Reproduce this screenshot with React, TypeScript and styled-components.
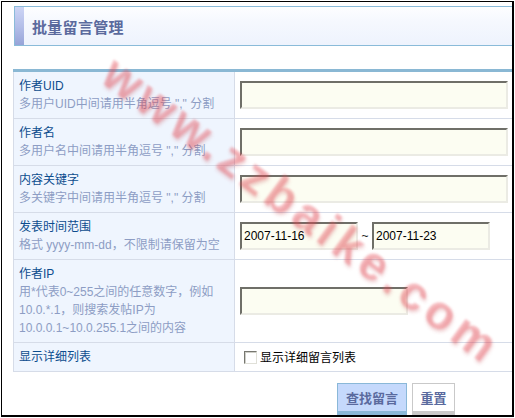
import React from "react";
import styled, { createGlobalStyle } from "styled-components";

const GlobalStyle = createGlobalStyle`
  html, body {
    margin: 0;
    padding: 0;
    background: #ffffff;
  }
  body {
    font-family: "Liberation Sans", "Noto Sans CJK SC", sans-serif;
    font-size: 12px;
  }
  * {
    box-sizing: border-box;
  }
`;

type Field = {
  label: string;
  hints: string[];
  kind: "text" | "date" | "short" | "check";
};

const fields: Field[] = [
  { label: "作者UID", hints: ['多用户UID中间请用半角逗号 "," 分割'], kind: "text" },
  { label: "作者名", hints: ['多用户名中间请用半角逗号 "," 分割'], kind: "text" },
  { label: "内容关键字", hints: ['多关键字中间请用半角逗号 "," 分割'], kind: "text" },
  { label: "发表时间范围", hints: ["格式 yyyy-mm-dd，不限制请保留为空"], kind: "date" },
  {
    label: "作者IP",
    hints: [
      "用*代表0~255之间的任意数字，例如",
      "10.0.*.1，则搜索发帖IP为",
      "10.0.0.1~10.0.255.1之间的内容",
    ],
    kind: "short",
  },
  { label: "显示详细列表", hints: [], kind: "check" },
];

export default function App() {
  const renderControl = (field: Field) => {
    switch (field.kind) {
      case "date":
        return (
          <DateRange>
            <TextInput $width={118} defaultValue="2007-11-16" />
            <Tilde>~</Tilde>
            <TextInput $width={118} defaultValue="2007-11-23" />
          </DateRange>
        );
      case "short":
        return <TextInput $width={168} />;
      case "check":
        return (
          <CheckLabel>
            <CheckBox type="checkbox" />
            显示详细留言列表
          </CheckLabel>
        );
      default:
        return <TextInput $width={268} />;
    }
  };

  return (
    <>
      <GlobalStyle />
      <Frame>
        <Page>
          <Header>
            <Accent />
            <Title>批量留言管理</Title>
          </Header>
          <Form>
            {fields.map((field) => (
              <Row key={field.label}>
                <LabelCell>
                  <Label>{field.label}</Label>
                  {field.hints.map((hint) => (
                    <Hint key={hint}>{hint}</Hint>
                  ))}
                </LabelCell>
                <ControlCell>{renderControl(field)}</ControlCell>
              </Row>
            ))}
            <ButtonBar>
              <PrimaryButton>查找留言</PrimaryButton>
              <PlainButton>重置</PlainButton>
            </ButtonBar>
          </Form>
          <Watermark>www.zzbaike.com</Watermark>
        </Page>
      </Frame>
    </>
  );
}

const Frame = styled.div`
  position: relative;
  width: 513px;
  height: 416px;
  margin: 1px;
  border-style: solid;
  border-color: #000000;
  border-width: 1px 2px 2px 1px;
  overflow: hidden;
  background: #ffffff;
`;

const Page = styled.div`
  width: 530px;
  padding: 4px 0 0 11px;
`;

const Header = styled.div`
  display: flex;
  align-items: center;
  height: 40px;
  margin-left: 1px;
  border: 1px solid #8abbd9;
  background: linear-gradient(#fdfeff, #f5f8fe 40%, #eef3fd);
`;

const Accent = styled.div`
  align-self: stretch;
  width: 9px;
  background: linear-gradient(#cdd5f5, #b4bfe9 50%, #97a4d8);
`;

const Title = styled.h1`
  margin: 0 0 0 8px;
  font-family: "Noto Sans CJK SC", "Liberation Sans", sans-serif;
  font-size: 15px;
  font-weight: 700;
  color: #5b6a9d;
  letter-spacing: 0.3px;
`;

const Form = styled.div`
  width: 502px;
  margin-top: 23px;
  border-top: 3px solid #8ab8d4;
`;

const Row = styled.div`
  display: grid;
  grid-template-columns: 222px 1fr;
  border-bottom: 1px solid #d6dce8;
`;

const LabelCell = styled.div`
  padding: 5px 5px;
  background: #eff5fe;
  border-left: 1px solid #d6dce8;
  border-right: 1px solid #d6dce8;
  line-height: 18px;
`;

const Label = styled.div`
  color: #0d4d8e;
  font-size: 12px;
`;

const Hint = styled.div`
  color: #8d9dc4;
  font-size: 12px;
  white-space: nowrap;
`;

const ControlCell = styled.div`
  display: flex;
  align-items: center;
  padding: 0 5px;
`;

const TextInput = styled.input<{ $width: number }>`
  width: ${(p) => p.$width}px;
  height: 28px;
  padding: 0 2px;
  border-style: solid;
  border-width: 2px;
  border-color: #6f6f68 #ebebe4 #ebebe4 #6f6f68;
  background: #fcfdf2;
  font-family: "Liberation Sans", sans-serif;
  font-size: 12px;
  color: #000000;
  outline: none;
`;

const DateRange = styled.div`
  display: flex;
  align-items: center;
`;

const Tilde = styled.span`
  width: 14px;
  text-align: center;
  color: #222222;
`;

const CheckLabel = styled.label`
  display: flex;
  align-items: center;
  gap: 3px;
  padding-left: 4px;
  color: #000000;
  font-family: "Noto Sans CJK SC", sans-serif;
  font-size: 12px;
  line-height: 18px;
`;

const CheckBox = styled.input`
  appearance: none;
  width: 13px;
  height: 13px;
  margin: 0;
  border-style: solid;
  border-width: 1px;
  border-color: #777770 #e0e0d8 #e0e0d8 #777770;
  box-shadow: inset 1px 1px 0 #cfcfc8;
  background: #ffffff;
`;

const ButtonBar = styled.div`
  display: flex;
  gap: 5px;
  padding: 11px 0 0 324px;
  height: 44px;
`;

const BaseButton = styled.button`
  height: 32px;
  padding: 0;
  border-style: solid;
  border-width: 1px 1px 4px;
  font-family: "Noto Sans CJK SC", sans-serif;
  font-size: 13px;
  font-weight: 700;
  white-space: nowrap;
  color: #5a6a9e;
  cursor: pointer;
`;

const PrimaryButton = styled(BaseButton)`
  width: 70px;
  background: #c5d9fc;
  border-color: #8ab8d8;
`;

const PlainButton = styled(BaseButton)`
  width: 43px;
  background: #ffffff;
  border-color: #c9c9c9;
`;

const Watermark = styled.div`
  position: absolute;
  left: 300px;
  top: 208px;
  transform: translate(-50%, -50%) rotate(36.4deg);
  font-family: "Liberation Sans", sans-serif;
  font-size: 48px;
  font-weight: 700;
  letter-spacing: 5px;
  white-space: nowrap;
  color: rgba(235, 80, 90, 0.34);
  text-shadow: 2px 2px 3px rgba(190, 40, 50, 0.22);
  filter: blur(1px);
  pointer-events: none;
`;
